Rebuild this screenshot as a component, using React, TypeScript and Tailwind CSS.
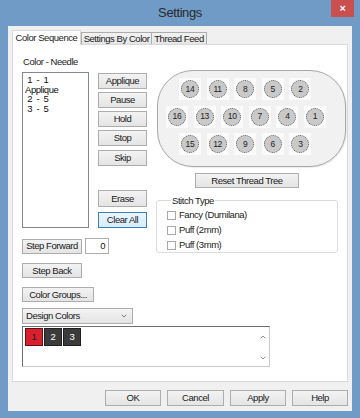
import React from 'react';
import { ChevronDown, ChevronUp } from 'lucide-react';

// Windows 8 style "Settings" dialog

function Btn({ children, className = '', focused = false }: { children: React.ReactNode; className?: string; focused?: boolean }) {
  return (
    <div
      className={`flex items-center justify-center border text-[#1a1a1a] ${
        focused
          ? 'border-[#3c7fb1] bg-linear-to-b from-[#eaf6fd] to-[#d7ecfa]'
          : 'border-[#adadad] bg-linear-to-b from-[#f3f3f3] to-[#e4e4e4]'
      } ${className}`}
    >
      {children}
    </div>
  );
}

function Needle({ n }: { n: number }) {
  return (
    <div className="w-[22px] h-[22px] bg-[#fbfbfb] flex items-center justify-center">
      <div className="w-[18px] h-[18px] rounded-full bg-[#c9c9c9] border border-dotted border-[#5a5a5a] flex items-center justify-center text-[8.5px] text-[#222] tracking-[-0.3px]">
        {n}
      </div>
    </div>
  );
}

function Check({ label }: { label: string }) {
  return (
    <div className="flex items-center h-[15px]">
      <div className="w-[9px] h-[9px] border border-[#a9a9a9] bg-white" />
      <span className="ml-[3px] text-[#222]">{label}</span>
    </div>
  );
}

export default function App() {
  const rows = [
    { pad: 'pl-[21px]', items: [14, 11, 8, 5, 2] },
    { pad: 'pl-[8px]', items: [16, 13, 10, 7, 4, 1] },
    { pad: 'pl-[21px]', items: [15, 12, 9, 6, 3] },
  ];

  return (
    <div className="w-[360px] h-[418px] bg-[#6f9bc6] flex flex-col font-['Liberation_Sans',Arial,sans-serif] text-[9.5px] tracking-[-0.45px] leading-none">
      {/* title bar */}
      <div className="relative h-[26px] flex items-center justify-center">
        <span className="text-[13px] tracking-[-0.4px] text-[#2a2a2a] -mt-[1px]">Settings</span>
        <div className="absolute top-0 right-[6px] w-[23px] h-[17px] bg-[#c9504e] flex items-center justify-center text-white text-[11px] font-bold">
          ×
        </div>
      </div>

      {/* client area */}
      <div className="mx-[8px] h-[385px] bg-[#f0f0f0] flex flex-col pt-[4px] pl-[4px] pr-[4px]">
        {/* tabs */}
        <div className="flex items-end h-[14px]">
          <div className="relative z-10 w-[69px] h-[15px] -mb-[1px] bg-white border border-b-0 border-[#d9d9d9] flex items-center justify-center text-[#1a1a1a]">
            Color Sequence
          </div>
          <div className="w-[71px] h-[12px] bg-linear-to-b from-[#f2f2f2] to-[#e5e5e5] border border-b-0 border-[#acacac] flex items-center justify-center text-[#1a1a1a]">
            Settings By Color
          </div>
          <div className="w-[55px] h-[12px] bg-linear-to-b from-[#f2f2f2] to-[#e5e5e5] border border-b-0 border-l-0 border-[#acacac] flex items-center justify-center text-[#1a1a1a]">
            Thread Feed
          </div>
        </div>

        {/* tab panel */}
        <div className="w-[336px] h-[338px] bg-white border border-[#d9d9d9] pl-[9px] pt-[11px] flex flex-col">
          <div className="flex items-start">
            {/* left block */}
            <div className="flex flex-col">
              <div className="h-[12px] flex items-center pl-[1px] text-[#222]">Color - Needle</div>
              <div className="flex items-start mt-[4px]">
                <div className="w-[67px] h-[156px] border border-[#828790] bg-white pt-[2px] pl-[2px] text-[#111] leading-[9.5px] whitespace-pre">
                  <div>{' 1  -  1'}</div>
                  <div>Applique</div>
                  <div>{' 2  -  5'}</div>
                  <div>{' 3  -  5'}</div>
                </div>
                <div className="ml-[9px] mt-[1px] flex flex-col w-[49px]">
                  <Btn className="h-[16px]">Applique</Btn>
                  <Btn className="h-[16px] mt-[3px]">Pause</Btn>
                  <Btn className="h-[16px] mt-[3px]">Hold</Btn>
                  <Btn className="h-[16px] mt-[3px]">Stop</Btn>
                  <Btn className="h-[16px] mt-[4px]">Skip</Btn>
                  <Btn className="h-[17px] mt-[24px]">Erase</Btn>
                  <Btn className="h-[16px] mt-[5px]" focused>Clear All</Btn>
                </div>
              </div>
              <div className="flex items-center mt-[10px]">
                <Btn className="w-[60px] h-[15px]">Step Forward</Btn>
                <div className="ml-[3px] w-[24px] h-[16px] border border-[#abadb3] bg-white flex items-center justify-end pr-[3px] text-[#111]">
                  0
                </div>
              </div>
              <Btn className="w-[60px] h-[15px] mt-[9px]">Step Back</Btn>
              <Btn className="w-[72px] h-[15px] mt-[9px]">Color Groups...</Btn>
            </div>

            {/* right block */}
            <div className="ml-[10px] mt-[14px] flex flex-col">
              <div className="w-[189px] h-[97px] rounded-[36px] border border-[#a8a8a8] bg-[#f1f1f1] pt-[7px] flex flex-col gap-[5.5px] shadow-[1px_1px_1px_rgba(0,0,0,0.08)]">
                {rows.map((r, i) => (
                  <div key={i} className={`flex gap-[5.6px] ${r.pad}`}>
                    {r.items.map((n) => (
                      <Needle key={n} n={n} />
                    ))}
                  </div>
                ))}
              </div>
              <Btn className="ml-[38px] mt-[6px] w-[104px] h-[15px]">Reset Thread Tree</Btn>
              <fieldset className="-ml-[1px] mt-[8px] w-[182px] h-[57px] border border-[#dcdcdc] rounded-[3px] pl-[10px] pt-[2px]">
                <legend className="ml-[4px] px-[1px] text-[#222]">Stitch Type</legend>
                <Check label="Fancy (Dumilana)" />
                <Check label="Puff (2mm)" />
                <Check label="Puff (3mm)" />
              </fieldset>
            </div>
          </div>

          {/* design colors */}
          <div className="mt-[6px] w-[111px] h-[16px] border border-[#adadad] bg-linear-to-b from-[#f3f3f3] to-[#e4e4e4] flex items-center justify-between pl-[3px] pr-[4px] text-[#1a1a1a]">
            <span>Design Colors</span>
            <ChevronDown size={8} strokeWidth={2} className="text-[#444]" />
          </div>
          <div className="mt-[2px] w-[248px] h-[41px] border border-[#c9c9c9] border-t-[#6e6e6e] border-l-[#6e6e6e] bg-white flex justify-between pl-[2px] pt-[1px]">
            <div className="flex gap-[1px] h-[18px]">
              <div className="w-[18px] h-[18px] bg-[#d9202e] border border-[#5a1414] flex justify-center pt-[3px] text-[#1a1a1a]">1</div>
              <div className="w-[18px] h-[18px] bg-[#3b3b3b] border border-[#1f1f1f] flex justify-center pt-[3px] text-white">2</div>
              <div className="w-[18px] h-[18px] bg-[#3b3b3b] border border-[#1f1f1f] flex justify-center pt-[3px] text-white">3</div>
            </div>
            <div className="w-[12px] flex flex-col items-center justify-between pt-[5px] pb-[4px]">
              <ChevronUp size={8} strokeWidth={2} className="text-[#555]" />
              <ChevronDown size={8} strokeWidth={2} className="text-[#555]" />
            </div>
          </div>
        </div>

        {/* dialog buttons */}
        <div className="mt-[8px] flex justify-end gap-[6px]">
          <Btn className="w-[56px] h-[16px]">OK</Btn>
          <Btn className="w-[57px] h-[16px]">Cancel</Btn>
          <Btn className="w-[56px] h-[16px]">Apply</Btn>
          <Btn className="w-[56px] h-[16px]">Help</Btn>
        </div>
      </div>
    </div>
  );
}
